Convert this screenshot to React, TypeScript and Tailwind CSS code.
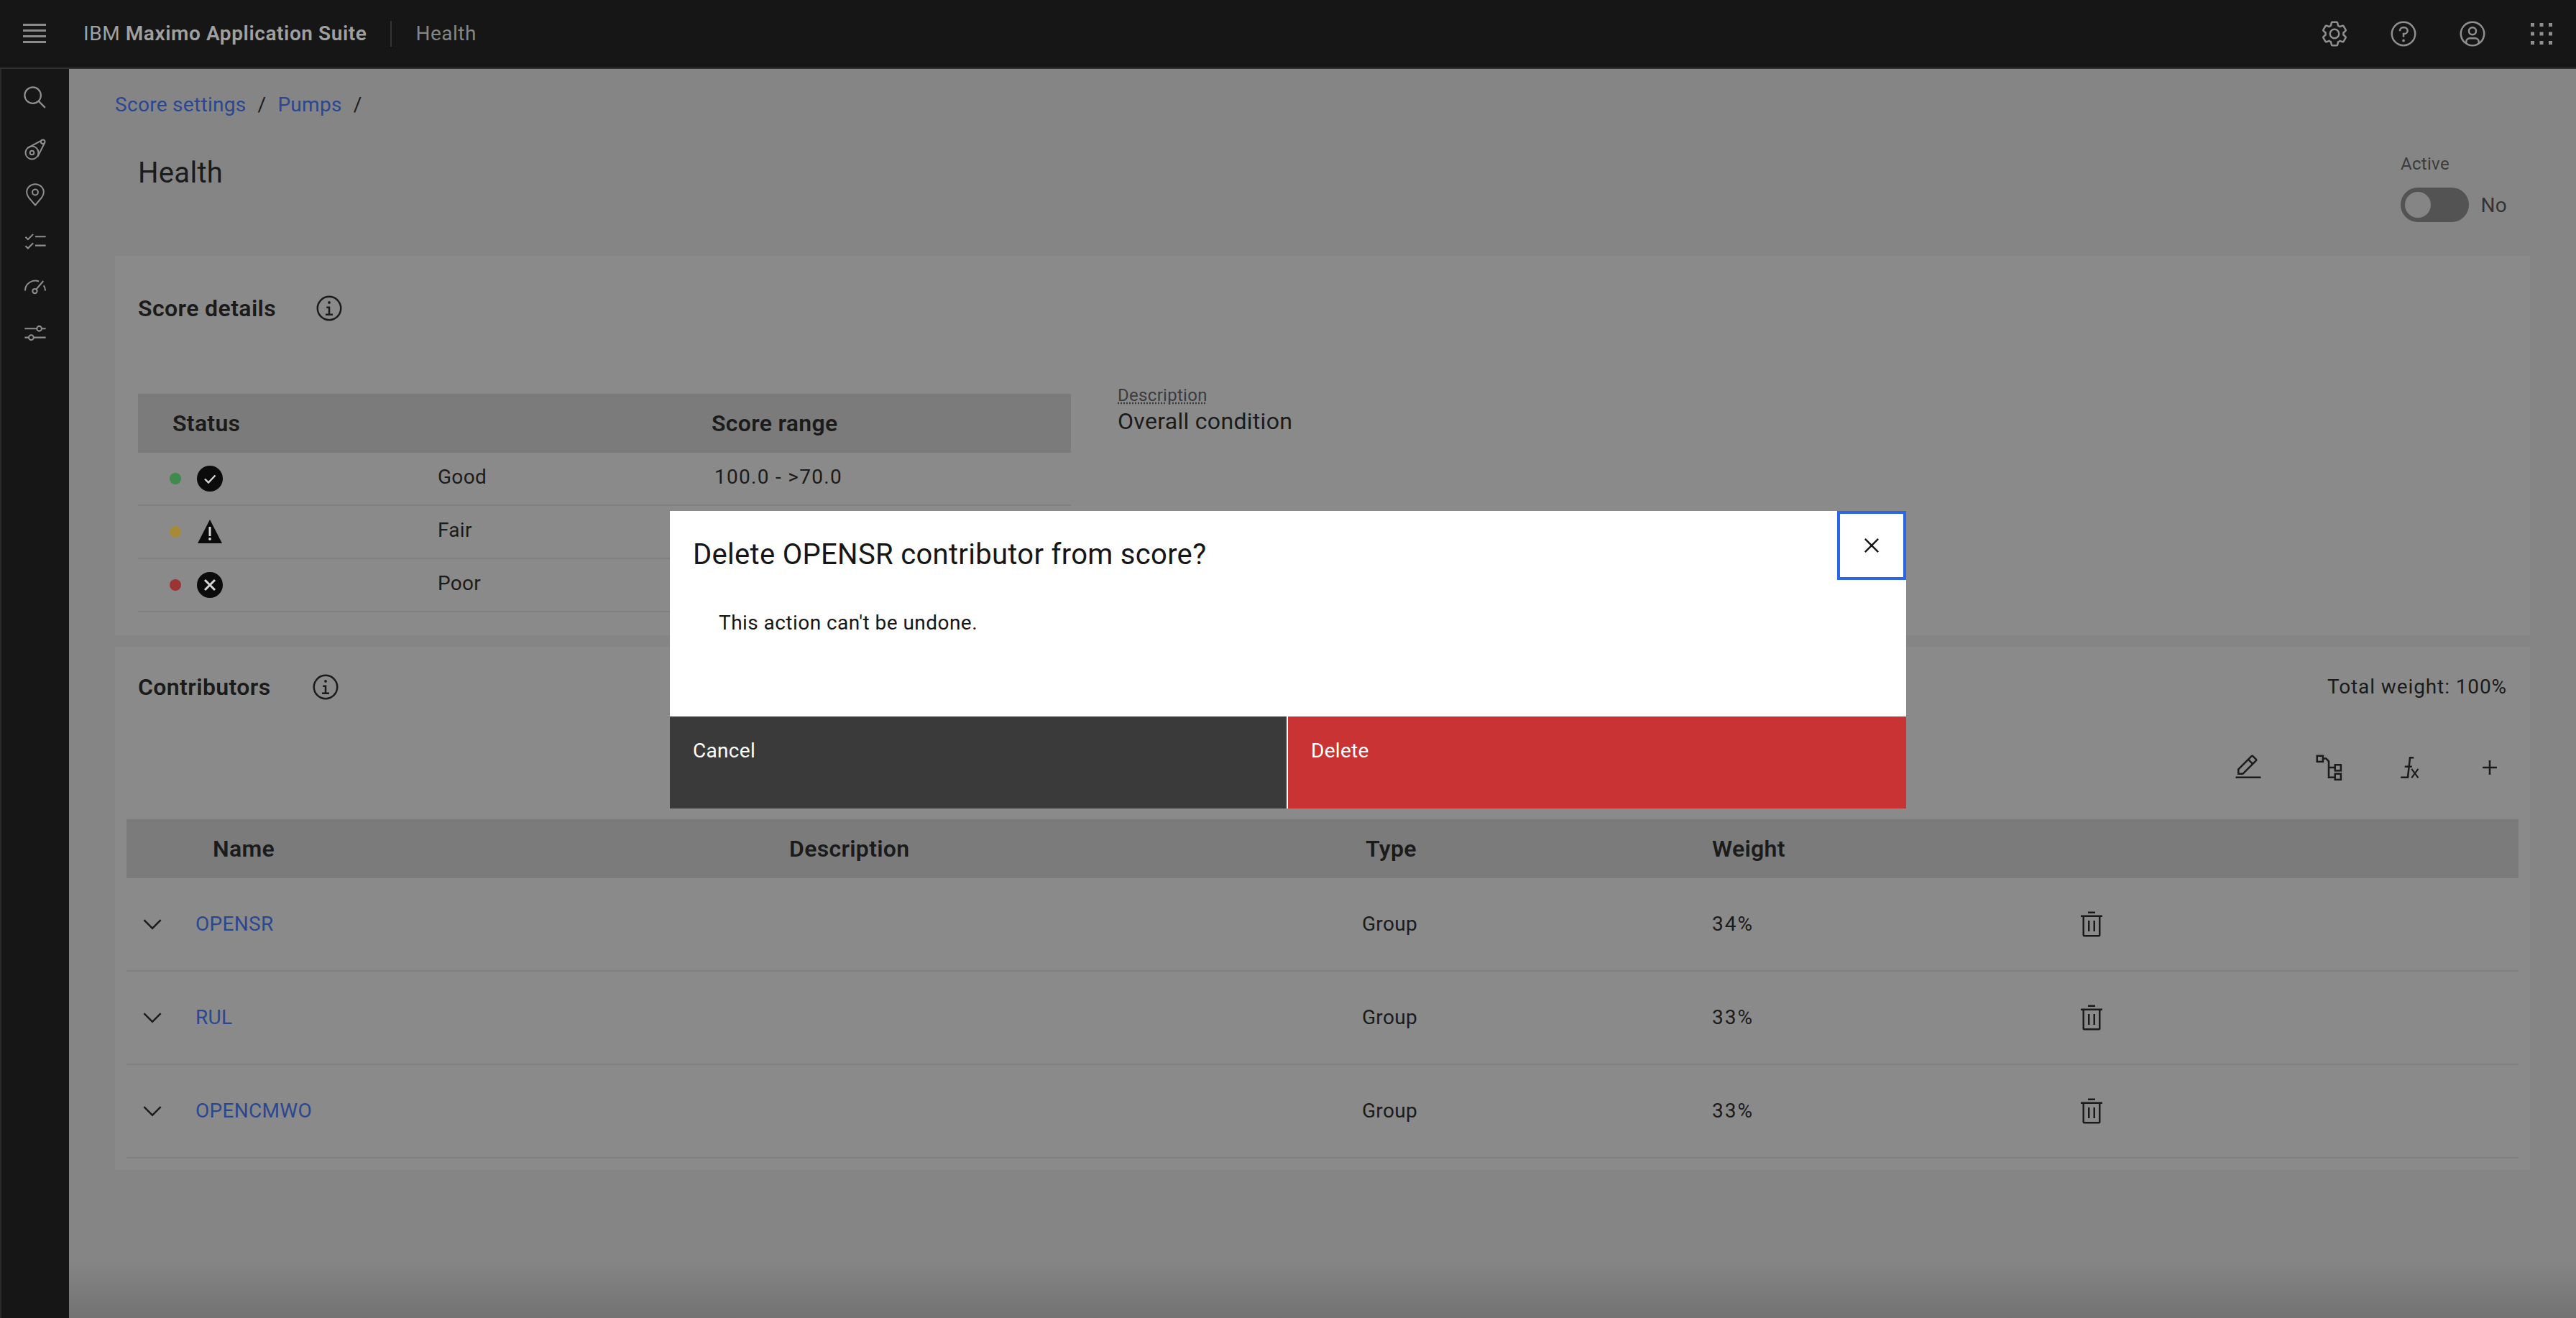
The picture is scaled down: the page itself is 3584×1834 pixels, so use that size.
import React from "react";

const Ic = ({ s = 40, c = "", children }: { s?: number; c?: string; children: React.ReactNode }) => (
  <svg width={s} height={s} viewBox="0 0 32 32" fill="currentColor" className={"shrink-0 " + c}>{children}</svg>
);

const Settings = () => (
  <Ic>
    <path d="M27,16.76c0-.25,0-.5,0-.76s0-.51,0-.77l1.92-1.68A2,2,0,0,0,29.3,11L26.94,7a2,2,0,0,0-1.73-1,2,2,0,0,0-.64.1l-2.43.82a11.35,11.35,0,0,0-1.31-.75l-.51-2.52a2,2,0,0,0-2-1.61H13.64a2,2,0,0,0-2,1.61l-.51,2.52a11.48,11.48,0,0,0-1.32.75L7.43,6.06A2,2,0,0,0,6.79,6,2,2,0,0,0,5.06,7L2.7,11a2,2,0,0,0,.41,2.51L5,15.24c0,.25,0,.5,0,.76s0,.51,0,.77L3.11,18.45A2,2,0,0,0,2.7,21L5.06,25a2,2,0,0,0,1.73,1,2,2,0,0,0,.64-.1l2.43-.82a11.35,11.35,0,0,0,1.31.75l.51,2.52a2,2,0,0,0,2,1.61h4.72a2,2,0,0,0,2-1.61l.51-2.52a11.48,11.48,0,0,0,1.32-.75l2.42.82a2,2,0,0,0,.64.1,2,2,0,0,0,1.73-1L29.3,21a2,2,0,0,0-.41-2.51ZM25.21,24l-3.43-1.16a8.86,8.86,0,0,1-2.71,1.57L18.36,28H13.64l-.71-3.55a9.36,9.36,0,0,1-2.7-1.57L6.79,24,4.43,20l2.72-2.4a8.9,8.9,0,0,1,0-3.13L4.43,12,6.79,8l3.43,1.16a8.86,8.86,0,0,1,2.71-1.57L13.64,4h4.72l.71,3.55a9.36,9.36,0,0,1,2.7,1.57L25.21,8,27.57,12l-2.72,2.4a8.9,8.9,0,0,1,0,3.13L27.57,20Z" />
    <path d="M16,22a6,6,0,1,1,6-6A5.94,5.94,0,0,1,16,22Zm0-10a3.91,3.91,0,0,0-4,4,3.91,3.91,0,0,0,4,4,3.91,3.91,0,0,0,4-4A3.91,3.91,0,0,0,16,12Z" />
  </Ic>
);
const Help = () => (
  <Ic>
    <path d="M16,2A14,14,0,1,0,30,16,14,14,0,0,0,16,2Zm0,26A12,12,0,1,1,28,16,12,12,0,0,1,16,28Z" />
    <circle cx="16" cy="23.5" r="1.5" />
    <path d="M17,8H15.5A4.49,4.49,0,0,0,11,12.5V13h2v-.5A2.5,2.5,0,0,1,15.5,10H17a2.5,2.5,0,0,1,0,5H15v4.5h2V17a4.5,4.5,0,0,0,0-9Z" />
  </Ic>
);
const User = () => (
  <Ic>
    <path d="M16,8a5,5,0,1,0,5,5A5,5,0,0,0,16,8Zm0,8a3,3,0,1,1,3-3A3.0034,3.0034,0,0,1,16,16Z" />
    <path d="M16,2A14,14,0,1,0,30,16,14.0158,14.0158,0,0,0,16,2ZM10,26.3765V25a3.0033,3.0033,0,0,1,3-3h6a3.0033,3.0033,0,0,1,3,3v1.3765a11.8989,11.8989,0,0,1-12,0Zm13.9925-1.4507A5.0016,5.0016,0,0,0,19,20H13a5.0016,5.0016,0,0,0-4.9925,4.9258,12,12,0,1,1,15.985,0Z" />
  </Ic>
);
const Grid = () => (
  <svg width="40" height="40" viewBox="0 0 40 40" fill="currentColor">
    {[5, 17.5, 30].map((y) => [5, 17.5, 30].map((x) => <rect key={`${x}-${y}`} x={x} y={y} width="5" height="5" />))}
  </svg>
);
const Info = () => (
  <Ic>
    <path d="M17 22L17 14 13 14 13 16 15 16 15 22 12 22 12 24 20 24 20 22 17 22zM16 8a1.5 1.5 0 101.5 1.5A1.5 1.5 0 0016 8z" />
    <path d="M16,30A14,14,0,1,1,30,16,14,14,0,0,1,16,30ZM16,4A12,12,0,1,0,28,16,12,12,0,0,0,16,4Z" />
  </Ic>
);
const Chevron = () => (
  <Ic><path d="M16 22L6 12 7.4 10.6 16 19.2 24.6 10.6 26 12z" /></Ic>
);
const Trash = () => (
  <Ic>
    <path d="M12 12H14V24H12zM18 12H20V24H18z" />
    <path d="M4 6V8H6V28a2 2 0 002 2H24a2 2 0 002-2V8h2V6zM8 28V8H24V28zM12 2H20V4H12z" />
  </Ic>
);
const Close = () => (
  <Ic><path d="M24 9.4L22.6 8 16 14.6 9.4 8 8 9.4 14.6 16 8 22.6 9.4 24 16 17.4 22.6 24 24 22.6 17.4 16 24 9.4z" /></Ic>
);
const Edit = () => (
  <Ic><path d="M2 26H30V28H2zM25.4 9c.8-.8.8-2 0-2.8 0 0 0 0 0 0l-3.6-3.6c-.8-.8-2-.8-2.8 0 0 0 0 0 0 0l-15 15V24h6.4L25.4 9zM20.4 4L24 7.6l-3 3L17.4 7 20.4 4zM6 22v-3.6l10-10 3.6 3.6-10 10H6z" /></Ic>
);
const Tree = () => (
  <svg width="40" height="40" viewBox="0 0 32 32" fill="none" stroke="currentColor" strokeWidth="2" className="shrink-0">
    <rect x="3" y="3" width="6.5" height="6.5" />
    <rect x="23" y="13" width="6.5" height="6.5" />
    <rect x="23" y="23" width="6.5" height="6.5" />
    <path d="M9.5 6H13l3 3v18h7M16 16h7" />
  </svg>
);
const Fx = () => (
  <svg width="40" height="40" viewBox="0 0 32 32" fill="none" stroke="currentColor" strokeWidth="2" className="shrink-0">
    <path d="M21 5h-4.2L14.4 27H6.5M11 15h8" />
    <path d="M18.6 17.5l7.4 10M26 17.5l-7.4 10" strokeWidth="1.7" />
  </svg>
);
const Plus = () => (
  <Ic><path d="M17 15L17 8 15 8 15 15 8 15 8 17 15 17 15 24 17 24 17 17 24 17 24 15z" /></Ic>
);

const stroke = { fill: "none", stroke: "currentColor", strokeWidth: 1.8 } as const;
const side = [
  <svg key="s" width="36" height="36" viewBox="0 0 32 32" fill="currentColor"><path d="M29,27.5859l-7.5521-7.5521a11.0177,11.0177,0,1,0-1.4141,1.4141L27.5859,29ZM4,13a9,9,0,1,1,9,9A9.01,9.01,0,0,1,4,13Z" /></svg>,
  <svg key="a" width="36" height="36" viewBox="0 0 32 32" {...stroke}>
    <circle cx="12" cy="20" r="8" /><circle cx="12" cy="20" r="2.5" /><circle cx="25.5" cy="6.5" r="2.5" />
    <path d="M7 14L23.5 5M19 25L27.5 8" />
  </svg>,
  <svg key="l" width="36" height="36" viewBox="0 0 32 32" {...stroke}>
    <circle cx="16" cy="12" r="3.5" />
    <path d="M16 28L8 18.5C6.5 16.5 5.5 14.5 5.5 12A10.5 10 0 0 1 26.5 12C26.5 14.5 25.5 16.5 24 18.5Z" strokeLinejoin="round" />
  </svg>,
  <svg key="c" width="36" height="36" viewBox="0 0 32 32" {...stroke}>
    <path d="M4 10.5l3 3 6.5-6.5M4 21.5l3 3 6.5-6.5M16 10h13M16 21h13" />
  </svg>,
  <svg key="g" width="36" height="36" viewBox="0 0 32 32" {...stroke}>
    <path d="M3.5 20A12.5 12.5 0 0 1 20.5 8.5M28.5 20A12.5 12.5 0 0 0 26.5 13.5M17.5 18L26 8" />
    <circle cx="15.5" cy="20.5" r="2.8" />
  </svg>,
  <svg key="f" width="36" height="36" viewBox="0 0 32 32" {...stroke}>
    <path d="M3 10h15M24 10h5M3 21h5M14 21h15" /><circle cx="21" cy="10" r="3" /><circle cx="11" cy="21" r="3" />
  </svg>,
];

const StatusIcon = ({ kind }: { kind: string }) => {
  if (kind === "ok")
    return (
      <svg width="36" height="36" viewBox="0 0 36 36">
        <circle cx="18" cy="18" r="18" fill="#0b0b0b" />
        <path d="M11 18.5l5 5 9.5-10" fill="none" stroke="#d5d5d5" strokeWidth="2.4" />
      </svg>
    );
  if (kind === "warn")
    return (
      <svg width="36" height="36" viewBox="0 0 36 36">
        <path d="M18 1L35 34H1Z" fill="#0b0b0b" />
        <path d="M16.5 11h3v13h-3z" fill="#d5d5d5" />
        <circle cx="18" cy="28" r="1.9" fill="#d5d5d5" />
      </svg>
    );
  return (
    <svg width="36" height="36" viewBox="0 0 36 36">
      <circle cx="18" cy="18" r="18" fill="#0b0b0b" />
      <path d="M11 11l14 14M25 11L11 25" fill="none" stroke="#d5d5d5" strokeWidth="3" />
    </svg>
  );
};

const statuses = [
  { kind: "ok", dot: "bg-[#3f8a4d]", label: "Good", range: "100.0 - >70.0" },
  { kind: "warn", dot: "bg-[#a68a38]", label: "Fair", range: "" },
  { kind: "bad", dot: "bg-[#9c3434]", label: "Poor", range: "" },
];
const contributors = [
  { name: "OPENSR", w: "34%" },
  { name: "RUL", w: "33%" },
  { name: "OPENCMWO", w: "33%" },
];

export default function App() {
  return (
    <div className="relative h-[1834px] w-[3584px] overflow-hidden bg-[#858585] font-['Roboto','Liberation_Sans',sans-serif] text-[28px] tracking-[0.3px] text-[#1b1b1b]">
      <header className="flex h-[96px] items-center border-b-2 border-[#333333] bg-[#161616] text-[#8f8f8f]">
        <div className="flex w-[96px] flex-col items-center gap-[5px] pb-[2px]">
          {[0, 1, 2, 3].map((i) => <span key={i} className="block h-[3px] w-[32px] bg-[#8a8a8a]" />)}
        </div>
        <div className="ml-[20px] text-[28px] tracking-[0.58px] text-[#a0a0a0]">IBM <span className="font-semibold">Maximo Application Suite</span></div>
        <div className="ml-[33px] h-[36px] w-[2px] bg-[#333333]" />
        <div className="ml-[33px] text-[28px] tracking-[0.5px] text-[#858585]">Health</div>
        <div className="ml-auto flex">
          {[<Settings key="1" />, <Help key="2" />, <User key="3" />, <Grid key="4" />].map((icon, i) => (
            <div key={i} className="flex h-[94px] w-[96px] items-center justify-center">{icon}</div>
          ))}
        </div>
      </header>

      <div className="flex h-[1738px]">
        <aside className="flex w-[96px] shrink-0 flex-col items-center border-l-2 border-[#2a2a2a] bg-[#161616] pt-[22px] text-[#8f8f8f]">
          {side.map((icon, i) => (
            <div key={i} className={`flex h-[36px] items-center justify-center ${i === 0 ? "" : i === 1 ? "mt-[36px]" : "mt-[28px]"}`}>{icon}</div>
          ))}
        </aside>

        <main className="relative flex min-w-0 flex-1 flex-col bg-[#858585] px-[64px]">
          <nav className="flex h-[102px] items-center gap-[16px] pb-[2px]">
            <span className="text-[#2a4790]">Score settings</span>
            <span>/</span>
            <span className="text-[#2a4790]">Pumps</span>
            <span>/</span>
          </nav>

          <div className="flex h-[158px] justify-between px-[32px]">
            <h1 className="pt-[16px] text-[40px] font-normal leading-[54px]">Health</h1>
            <div className="w-[148px] pt-[14px]">
              <div className="text-[24px] leading-[32px] text-[#3c3c3c]">Active</div>
              <div className="mt-[16px] flex items-center gap-[16px]">
                <div className="flex h-[48px] w-[96px] items-center rounded-full bg-[#535353] pl-[6px]">
                  <span className="block h-[36px] w-[36px] rounded-full bg-[#858585]" />
                </div>
                <span className="pt-[2px] text-[28px] leading-[48px] text-[#333333]">No</span>
              </div>
            </div>
          </div>

          <section className="h-[528px] bg-[#8a8a8a] px-[32px]">
            <div className="flex h-[146px] items-center gap-[54px] tracking-[0.4px]">
              <span className="text-[32px] font-semibold">Score details</span>
              <Info />
            </div>
            <div className="flex">
              <div className="w-[1298px]">
                <div className="mt-[46px] flex h-[82px] items-center bg-[#7b7b7b] text-[32px] font-semibold">
                  <span className="ml-[48px] w-[750px]">Status</span>
                  <span>Score range</span>
                </div>
                {statuses.map((s) => (
                  <div key={s.label} className="flex h-[74px] items-center border-b-2 border-[#7f7f7f]">
                    <span className={`ml-[44px] block h-[16px] w-[16px] rounded-full ${s.dot}`} />
                    <span className="ml-[22px] flex"><StatusIcon kind={s.kind} /></span>
                    <span className="ml-[299px] w-[385px] pb-[4px]">{s.label}</span>
                    <span className="pb-[4px] tracking-[1.3px]">{s.range}</span>
                  </div>
                ))}
              </div>
              <div className="ml-[65px] mt-[35px]">
                <div className="text-[24px] leading-[26px] text-[#3c3c3c] underline decoration-dotted underline-offset-2">Description</div>
                <div className="mt-[2px] text-[32px] leading-[42px]">Overall condition</div>
              </div>
            </div>
          </section>

          <section className="mt-[16px] h-[728px] bg-[#8a8a8a] px-[16px]">
            <div className="flex h-[112px] items-center justify-between px-[16px]">
              <div className="flex items-center gap-[56px] tracking-[0.4px]">
                <span className="text-[32px] font-semibold">Contributors</span>
                <Info />
              </div>
              <span className="tracking-[0.9px]">Total weight: 100%</span>
            </div>
            <div className="flex h-[128px] items-center justify-end gap-[72px] pb-[16px] pr-[20px]">
              <Edit /><Tree /><Fx /><Plus />
            </div>
            <div className="grid h-[82px] grid-cols-[120px_802px_802px_482px_1122px] items-center bg-[#7b7b7b] text-[32px] font-semibold">
              <span />
              <span>Name</span>
              <span>Description</span>
              <span>Type</span>
              <span>Weight</span>
            </div>
            {contributors.map((r) => (
              <div key={r.name} className="flex h-[130px] items-center border-b-2 border-[#7f7f7f]">
                <span className="ml-[16px] flex"><Chevron /></span>
                <span className="ml-[40px] w-[1623px] text-[#2a4790]">{r.name}</span>
                <span className="w-[487px]">Group</span>
                <span className="w-[508px] tracking-[2px]">{r.w}</span>
                <Trash />
              </div>
            ))}
          </section>

          <div className="absolute inset-x-0 bottom-0 h-[80px] bg-gradient-to-b from-transparent to-[#00000024]" />
        </main>
      </div>

      <div className="absolute left-[932px] top-[711px] w-[1720px] bg-white text-[#161616]">
        <div className="flex h-[286px] flex-col">
          <div className="flex h-[96px] items-start justify-between">
            <h2 className="pl-[32px] pt-[33px] text-[40px] font-normal leading-[56px]">Delete OPENSR contributor from score?</h2>
            <button className="flex h-[96px] w-[96px] items-center justify-center border-4 border-[#2b66e8] bg-white"><Close /></button>
          </div>
          <p className="pl-[68px] pt-[40px] leading-[40px] tracking-[0.45px]">This action can't be undone.</p>
        </div>
        <div className="flex h-[128px] text-white">
          <button className="h-full w-[858px] bg-[#3a3a3a] pb-[32px] pl-[32px] pr-[16px] text-left">Cancel</button>
          <div className="w-[2px] bg-white" />
          <button className="h-full flex-1 bg-[#ca3333] pb-[32px] pl-[32px] text-left">Delete</button>
        </div>
      </div>
    </div>
  );
}
